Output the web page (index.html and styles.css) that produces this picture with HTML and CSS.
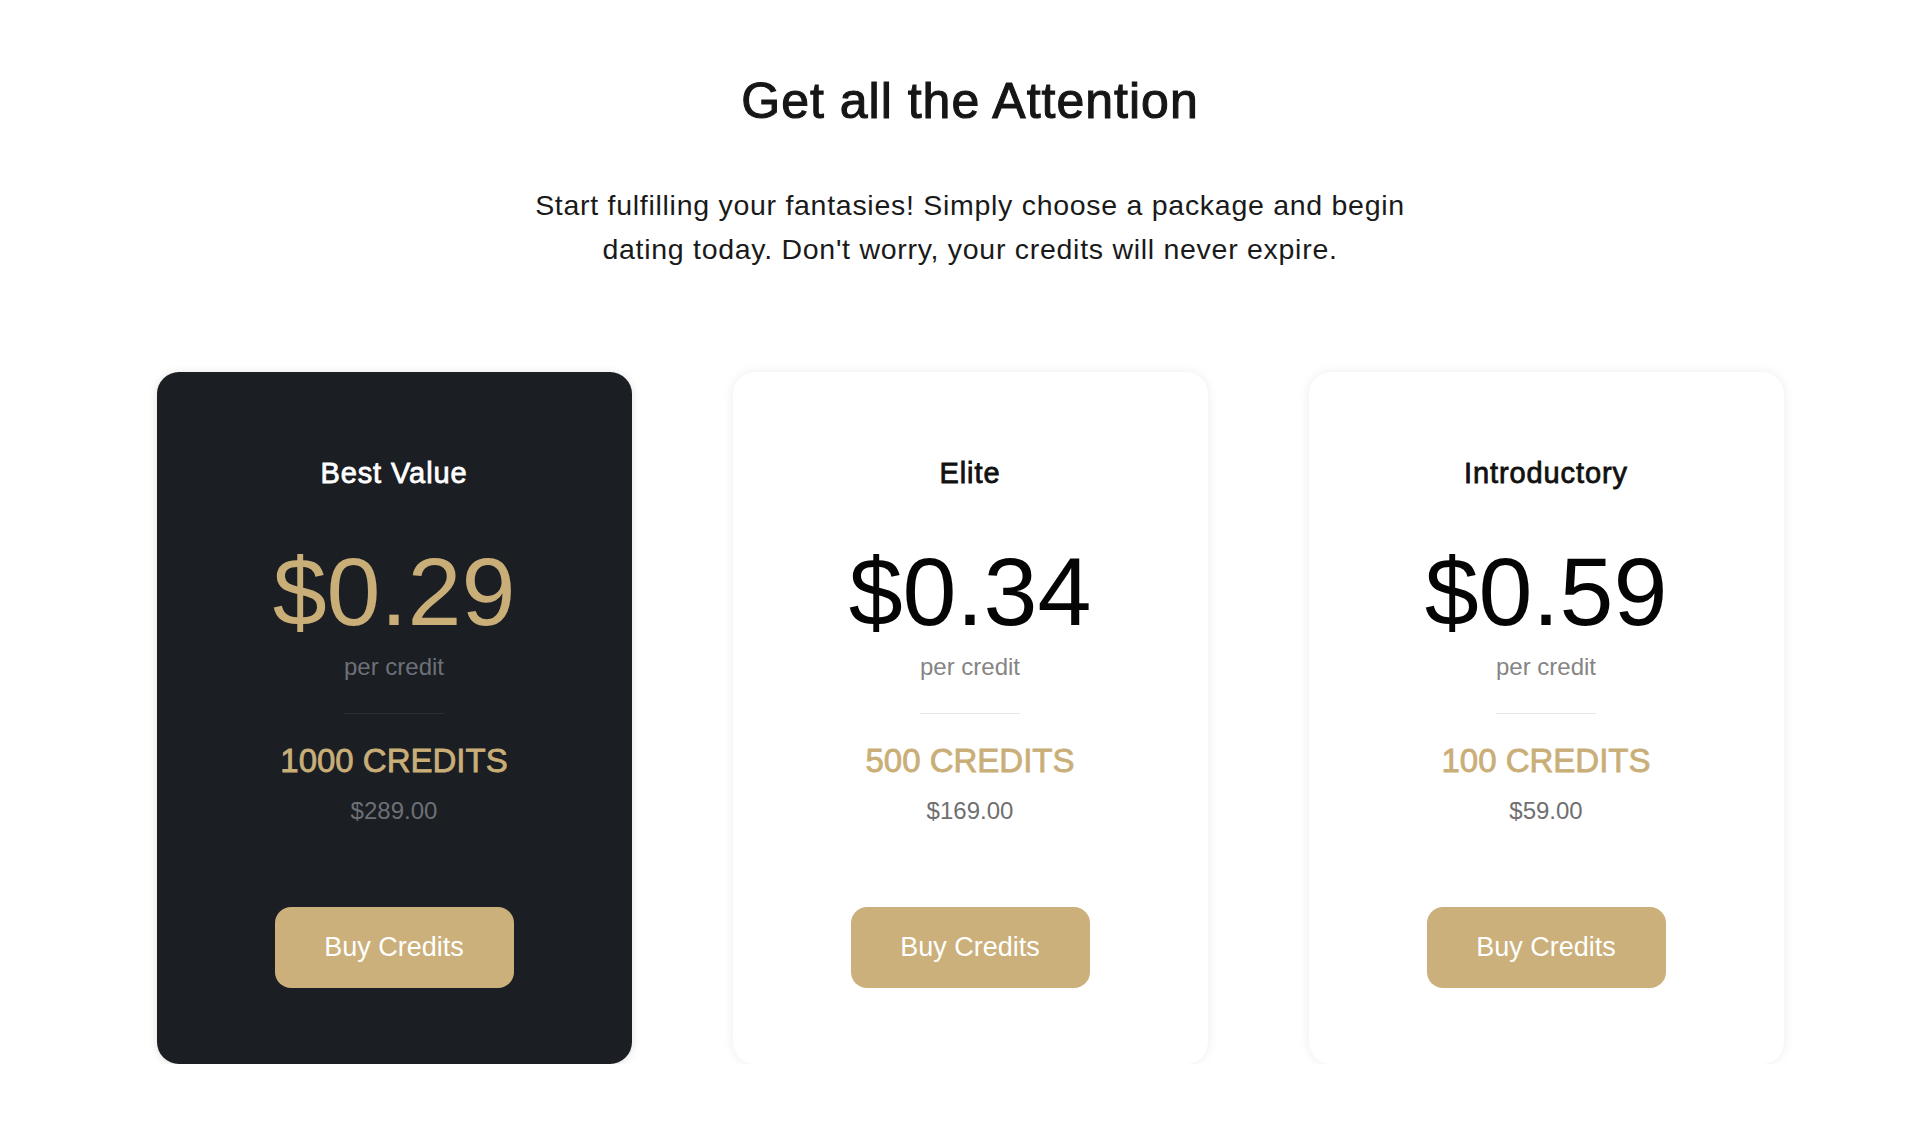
FILE: index.html
```html
<!DOCTYPE html>
<html lang="en">
<head>
<meta charset="utf-8">
<title>Get all the Attention</title>
<link rel="stylesheet" href="styles.css">
</head>
<body>
<main class="page">
  <header class="intro">
    <h1 class="title">Get all the Attention</h1>
    <p class="lead">Start fulfilling your fantasies! Simply choose a package and begin dating today. Don't worry, your credits will never expire.</p>
  </header>
  <section class="plans">
    <article class="card card-dark">
      <h2 class="plan-name">Best Value</h2>
      <div class="price">$0.29</div>
      <div class="per">per credit</div>
      <hr class="divider">
      <div class="credits">1000 CREDITS</div>
      <div class="amount">$289.00</div>
      <button class="buy">Buy Credits</button>
    </article>
    <article class="card">
      <h2 class="plan-name">Elite</h2>
      <div class="price">$0.34</div>
      <div class="per">per credit</div>
      <hr class="divider">
      <div class="credits">500 CREDITS</div>
      <div class="amount">$169.00</div>
      <button class="buy">Buy Credits</button>
    </article>
    <article class="card">
      <h2 class="plan-name">Introductory</h2>
      <div class="price">$0.59</div>
      <div class="per">per credit</div>
      <hr class="divider">
      <div class="credits">100 CREDITS</div>
      <div class="amount">$59.00</div>
      <button class="buy">Buy Credits</button>
    </article>
  </section>
</main>
</body>
</html>
```
FILE: styles.css
```css
* { box-sizing: border-box; }
html, body { margin: 0; padding: 0; background: #ffffff; }
body {
  font-family: "Liberation Sans", Arial, Helvetica, sans-serif;
  color: #1a1a1a;
}
.page {
  padding: 73px 0 0 20px;
}
.intro {
  display: flex;
  flex-direction: column;
  align-items: center;
  text-align: center;
}
.title {
  margin: 0;
  font-size: 50px;
  line-height: 56px;
  font-weight: 400;
  letter-spacing: 1px;
  -webkit-text-stroke: 1.1px #161616;
  color: #161616;
}
.lead {
  margin: 54px 0 0;
  max-width: 900px;
  font-size: 28.5px;
  line-height: 44px;
  letter-spacing: 0.72px;
  color: #1a1a1a;
}
.plans {
  margin-top: 101px;
  display: grid;
  grid-template-columns: repeat(3, 475px);
  column-gap: 101px;
  justify-content: center;
}
.card {
  display: flex;
  flex-direction: column;
  align-items: center;
  text-align: center;
  background: #ffffff;
  border-radius: 22px;
  box-shadow: 0 0 11px rgba(0, 0, 0, 0.08);
  padding: 84px 0 76px;
}
.card-dark {
  background: #1b1e23;
  box-shadow: 0 1px 10px rgba(0, 0, 0, 0.12);
}
.plan-name {
  margin: 0;
  font-size: 29px;
  line-height: 34px;
  font-weight: 400;
  letter-spacing: 0.9px;
  -webkit-text-stroke: 0.8px #111111;
  color: #111111;
}
.card-dark .plan-name {
  color: #ffffff;
  -webkit-text-stroke-color: #ffffff;
}
.price {
  margin-top: 52px;
  font-size: 97px;
  line-height: 100px;
  color: #050505;
}
.card-dark .price { color: #c9ae78; }
.per {
  margin-top: 11px;
  font-size: 24px;
  line-height: 28px;
  color: #858585;
}
.card-dark .per { color: #6d7076; }
.divider {
  margin: 32px 0 0;
  width: 100px;
  height: 1px;
  border: 0;
  background: #e6e6e6;
}
.card-dark .divider { background: #2b2e34; }
.credits {
  margin-top: 28px;
  font-size: 33px;
  line-height: 38px;
  font-weight: 400;
  -webkit-text-stroke: 0.8px #c9ae78;
  color: #c9ae78;
}
.amount {
  margin-top: 17px;
  font-size: 24px;
  line-height: 28px;
  color: #707070;
}
.card-dark .amount { color: #6d7076; }
.buy {
  margin-top: 82px;
  width: 239px;
  height: 81px;
  border: 0;
  border-radius: 16px;
  background: #cbb07b;
  color: #ffffff;
  font-family: "Liberation Sans", Arial, Helvetica, sans-serif;
  font-size: 27px;
  cursor: pointer;
}
```
